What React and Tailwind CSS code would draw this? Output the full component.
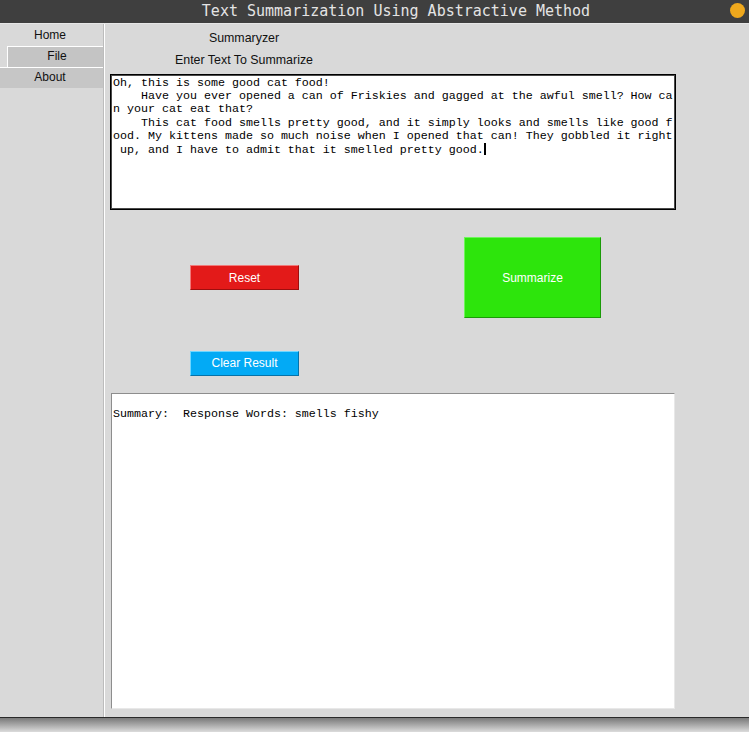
import React from "react";

const inputLines = [
  "Oh, this is some good cat food!",
  "    Have you ever opened a can of Friskies and gagged at the awful smell? How ca",
  "n your cat eat that?",
  "    This cat food smells pretty good, and it simply looks and smells like good f",
  "ood. My kittens made so much noise when I opened that can! They gobbled it right",
  " up, and I have to admit that it smelled pretty good.",
];

const mono = { fontFamily: '"Liberation Mono", monospace' };

export default function App() {
  return (
    <div className="h-[732px] w-[749px] flex flex-col bg-[#d9d9d9] font-['Liberation_Sans',Arial,sans-serif] overflow-hidden">
      {/* Title bar */}
      <div className="h-[24px] shrink-0 bg-[#3f3f3f] border-b border-[#e6e6e6] flex items-center relative">
        <div className="flex-1 pl-[62px] text-center text-[15px] leading-[20px] text-[#e4e4e4] font-['DejaVu_Sans_Mono',monospace] -mt-[1px]">
          Text Summarization Using Abstractive Method
        </div>
        <div className="w-[15px] h-[15px] rounded-full bg-[#eea81d] mr-[4px] -mt-[2px]" />
      </div>

      {/* Window body */}
      <div className="h-[694px] shrink-0 flex border-b border-[#2a2a2a]">
        {/* Sidebar */}
        <div className="w-[105px] shrink-0 flex flex-col border-r border-white">
          <div className="w-[104px] flex-1 border-r border-[#bcbcbc] text-[12px] text-[#111]">
            <div className="h-[22px] leading-[22px] pr-[3px] text-center">Home</div>
            <div className="h-[21px] ml-[7px] bg-[#c4c4c4] border-l border-t border-white leading-[19px] text-center pl-[3px]">
              File
            </div>
            <div className="h-[21px] bg-[#c6c6c6] border-t border-white leading-[19px] text-center pr-[3px]">
              About
            </div>
          </div>
        </div>

        {/* Content */}
        <div className="flex-1 flex flex-col">
          <div className="w-[278px] pt-[5px] text-center text-[12.4px] text-[#111]">
            <div className="h-[18px] leading-[18px]">Summaryzer</div>
            <div className="h-[18px] leading-[18px] mt-[4px]">Enter Text To Summarize</div>
          </div>

          {/* Input text */}
          <div className="mt-[5px] ml-[5px] w-[566px] h-[136px] bg-white border border-black shadow-[inset_0_0_0_1px_#4a4a4a] pl-[2px] pt-[2px] text-[11.67px] leading-[13.2px] text-black" style={mono}>
            {inputLines.map((line, i) => (
              <div key={i} className="whitespace-pre h-[13.2px]">
                {line}
                {i === inputLines.length - 1 && (
                  <span className="inline-block w-[2px] h-[12px] bg-black align-[-2px]" />
                )}
              </div>
            ))}
          </div>

          {/* Buttons */}
          <div className="mt-[27px] flex items-center pl-[85px]">
            <button className="w-[109px] h-[25px] bg-[#e31a19] border border-[#f07a7a] border-r-[#9e0e0e] border-b-[#9e0e0e] text-white text-[12px]">
              Reset
            </button>
            <button className="ml-[165px] w-[137px] h-[81px] bg-[#2de50c] border border-[#6df55a] border-r-[#1b9a08] border-b-[#1b9a08] text-white text-[12px]">
              Summarize
            </button>
          </div>
          <div className="mt-[32px] pl-[85px]">
            <button className="w-[109px] h-[25px] bg-[#03aaf5] border border-[#6fd6ff] border-r-[#0672a8] border-b-[#0672a8] text-white text-[12px]">
              Clear Result
            </button>
          </div>

          {/* Result */}
          <div className="mt-[17px] ml-[6px] w-[564px] h-[316px] bg-white border border-[#8d8d8d] border-r-[#e8e8e8] border-b-[#e8e8e8] pl-[1px] pt-[1px] text-[11.67px] leading-[13.2px] text-black" style={mono}>
            <div className="h-[13.2px]" />
            <div className="whitespace-pre">Summary:  Response Words: smells fishy</div>
          </div>
        </div>
      </div>

      {/* Window shadow */}
      <div className="flex-1 bg-gradient-to-b from-[#7a7a7a] to-[#dcdcdc]" />
    </div>
  );
}
